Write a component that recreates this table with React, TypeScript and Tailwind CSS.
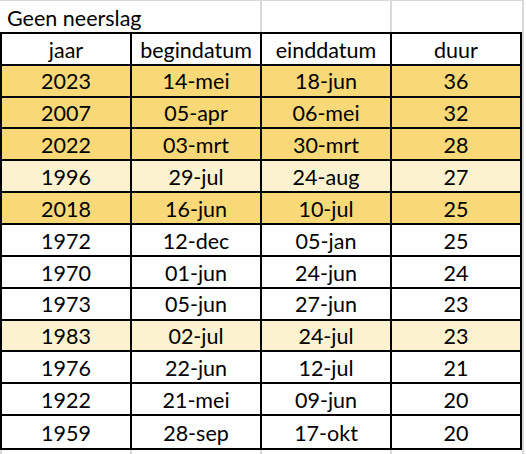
const rows: [string, string, string, string, "dark" | "light" | "none"][] = [
  ["2023", "14-mei", "18-jun", "36", "dark"],
  ["2007", "05-apr", "06-mei", "32", "dark"],
  ["2022", "03-mrt", "30-mrt", "28", "dark"],
  ["1996", "29-jul", "24-aug", "27", "light"],
  ["2018", "16-jun", "10-jul", "25", "dark"],
  ["1972", "12-dec", "05-jan", "25", "none"],
  ["1970", "01-jun", "24-jun", "24", "none"],
  ["1973", "05-jun", "27-jun", "23", "none"],
  ["1983", "02-jul", "24-jul", "23", "light"],
  ["1976", "22-jun", "12-jul", "21", "none"],
  ["1922", "21-mei", "09-jun", "20", "none"],
  ["1959", "28-sep", "17-okt", "20", "none"],
];

const bg = {
  dark: "bg-[#f8d877]",
  light: "bg-[#fdf2cf]",
  none: "bg-white",
};

function Row({ cells, tone, last }: { cells: string[]; tone: keyof typeof bg; last?: boolean }) {
  return (
    <div className={`flex h-[32px] border-t-2 border-black ${bg[tone]} ${last ? "box-content border-b-2" : ""}`}>
      {cells.map((c, i) => (
        <div
          key={i}
          className={`flex items-center justify-center pt-[3px] border-l-2 border-black ${
            i === 3 ? "w-[132px] border-r-2" : "w-[130px]"
          }`}
        >
          {c}
        </div>
      ))}
    </div>
  );
}

export default function App() {
  return (
    <div
      className="flex w-[526px] h-[454px] bg-white text-black text-[21.5px] leading-none overflow-hidden"
      style={{ fontFamily: "Lato, 'Open Sans', sans-serif" }}
    >
      <div className="flex flex-col w-[522px]">
        {/* Title row */}
        <div className="flex h-[32px] border-t border-[#d9d9d9]">
          <div className="w-[260px] flex items-center pl-[7px] pt-[4px] whitespace-nowrap">Geen neerslag</div>
          <div className="w-[2px] bg-[#d9d9d9]" />
          <div className="w-[128px]" />
          <div className="w-[2px] bg-[#d9d9d9]" />
          <div className="w-[130px]" />
        </div>

        <Row cells={["jaar", "begindatum", "einddatum", "duur"]} tone="none" />
        {rows.map((r, i) => (
          <Row key={r[0]} cells={r.slice(0, 4)} tone={r[4]} last={i === rows.length - 1} />
        ))}

        {/* gridlines below */}
        <div className="flex h-[4px]">
          <div className="w-[2px] bg-[#d9d9d9]" />
          <div className="w-[128px]" />
          <div className="w-[2px] bg-[#d9d9d9]" />
          <div className="w-[128px]" />
          <div className="w-[2px] bg-[#d9d9d9]" />
          <div className="w-[128px]" />
          <div className="w-[2px] bg-[#d9d9d9]" />
        </div>
      </div>
      <div className="w-[2px] bg-[#d9d9d9]" />
      <div className="w-[2px]" />
    </div>
  );
}
